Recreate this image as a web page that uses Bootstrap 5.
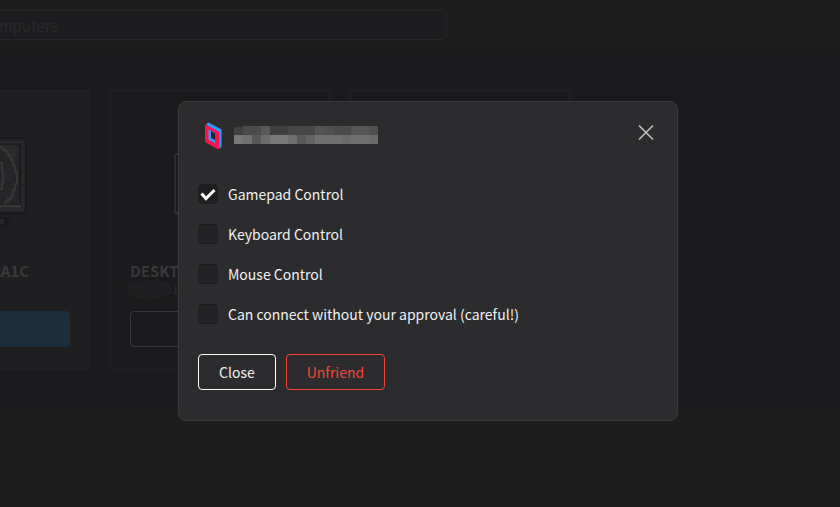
<!DOCTYPE html>
<html lang="en" data-bs-theme="dark">
<head>
<meta charset="utf-8">
<meta name="viewport" content="width=device-width, initial-scale=1">
<title>Friend permissions</title>
<link rel="stylesheet" href="https://cdn.jsdelivr.net/npm/bootstrap@5.3.0/dist/css/bootstrap.min.css">
<style>
  body { background: #1d1d1d; color: #f0f0f0; font-family: "Noto Sans CJK SC", "Noto Sans", sans-serif; font-size: 14px; line-height: 20px; min-height: 100vh; overflow: hidden; }
  .topbar { padding: 10px 0; margin-left: -40px; }
  .search-box { width: 487px; height: 30px; padding: 0 19px; font-size: 15px; background: #1d1d1f; border: 1px solid #262628; border-radius: 5px; }
  .search-box::placeholder { color: #29292b; opacity: 1; }
  .hosts { background: #1b1b1d; padding: 40px 0; }
  .host-list { gap: 20px; margin-left: -130px; }
  .host { flex: 0 0 220px; height: 280px; padding: 0 19px 22px; border: 1px solid #232325; }
  .host-own { background: #1f1f21; }
  .host-art { height: 170px; padding-top: 42px; }
  .host-name { font-size: 15px; line-height: 20px; font-weight: 700; color: #39393b; white-space: nowrap; }
  .host-own .host-name { padding-right: 41px; text-align: right; }
  .host-user { font-size: 12px; line-height: 16px; height: 30px; color: #2c2c2e; }
  .smudge { width: 46px; height: 18px; border-radius: 30% 30% 50% 50%; background: #1f1f21; margin-left: -4px; }
  .host-btn { height: 36px; border: 1px solid #38383a; border-radius: 4px; }
  .host-own .host-btn { background: #1c2d3b; border-color: #1c2d3b; }
  .overlay { padding: 15px 0 0 16px; }
  .panel { width: 500px; padding: 19px; background: #2c2c2e; border: 1px solid #39393b; border-radius: 8px; }
  .panel-head { height: 30px; margin-bottom: 33px; padding-left: 5px; gap: 10px; }
  .close-x { padding: 0; width: 24px; height: 24px; line-height: 0; border: 0; }
  .options { gap: 20px; margin-bottom: 30px; }
  .option { gap: 10px; min-height: 20px; margin: 0; padding: 0; }
  .option .form-check-input { float: none; margin: 0; width: 20px; height: 20px; background-color: #232325; border: 1px solid #1c1c1e; border-radius: 4px; }
  .option .form-check-input:checked { background-color: #1f1f21; background-size: 20px 20px; background-image: url("data:image/svg+xml,%3csvg xmlns='http://www.w3.org/2000/svg' viewBox='0 0 20 20'%3e%3cpath d='M3.5 9.5l4.5 5 8.5-8.5' fill='none' stroke='%23fff' stroke-width='3'/%3e%3c/svg%3e"); }
  .actions { gap: 10px; padding-bottom: 11px; }
  .act { height: 36px; padding: 0 20px; font-size: 14px; line-height: 34px; border-radius: 4px; }
  .act-close { color: #f0f0f0; border-color: #fff; }
  .act-unfriend { color: #f5443b; border-color: #f5443b; }
</style>
</head>
<body>
<header class="topbar"><input class="form-control search-box" type="search" placeholder="Computers" aria-label="Computers"></header>
<main class="hosts">
  <div class="host-list d-flex">
    <article class="host host-own">
      <div class="host-art d-flex justify-content-center">
        <svg width="102" height="100" viewBox="0 0 102 100" shape-rendering="crispEdges" aria-hidden="true">
          <path d="M6 4h90v2h2v74h-2v2H6v-2H4V6h2z" fill="#1a1a1c"/>
          <path d="M6 6h90v73H6z" fill="#222325"/>
          <path d="M6 8h89v2H6z" fill="#2a2b2e"/>
          <path d="M93 9h2v69h-2z" fill="#27282a"/>
          <path d="M9 11h83v64H9z" fill="#1d1d20"/>
          <path d="M12 12h78v59H12z" fill="#242528"/>
          <path d="M72 12h18v8l-9 8z" fill="#292a2b"/>
          <path d="M9 72h83v2H9z" fill="#383838"/>
          <path d="M9 74h83v4H9z" fill="#292b2e"/>
          <path d="M71 14h2v2h2v2h3v3h2v2h2v4h2v6h2v6h2v12h-2v6h-2v6h-2v3h-3v2h-2v2h-2" fill="none" stroke="#353532" stroke-width="2"/>
          <path d="M71 30h2v8h1v12h-1v6h-2" fill="none" stroke="#353532" stroke-width="2"/>
          <path d="M22 84h57v3h2v6h-3v2H22z" fill="#1a1a1c"/>
          <path d="M24 86h51v5H24z" fill="#262729"/>
        </svg>
      </div>
      <h2 class="host-name mb-0">AA1C</h2>
      <div class="host-user"></div>
      <button class="btn w-100 host-btn" type="button" aria-label="Connect"></button>
    </article>
    <article class="host">
      <div class="host-art d-flex justify-content-center">
        <svg width="102" height="100" viewBox="0 0 102 100" shape-rendering="crispEdges" aria-hidden="true">
          <path d="M3 19h96v65H3z" fill="#171719"/>
          <path d="M5 20h92v62H5z" fill="#2b2c2e"/>
          <path d="M7 22h88v56H7z" fill="#19191b"/>
        </svg>
      </div>
      <h2 class="host-name mb-0">DESKTOP</h2>
      <div class="host-user d-flex"><span class="smudge"></span>10</div>
      <button class="btn w-100 host-btn" type="button" aria-label="Connect"></button>
    </article>
    <article class="host"></article>
  </div>
</main>
<div class="overlay position-fixed top-0 start-0 w-100 h-100 d-flex align-items-center justify-content-center">
  <section class="panel" role="dialog" aria-label="Friend permissions">
    <div class="panel-head d-flex align-items-center">
      <svg width="21" height="30" viewBox="0 0 21 30" aria-hidden="true">
        <path d="M3.500 2.500L5.500 1.500 18.500 8.500V26L16 27.500z" fill="#2f9dfa"/>
        <path d="M2 3L15.500 10.500Q16.500 11 16.500 12V28L14.500 28 3 21.500Q2 21 2 20z" fill="#ff1050"/>
        <path d="M5.500 8.500L12 12V22L5.500 18.500z" fill="#2f9dfa"/>
        <path d="M8 10L12 12.500V19L8 17z" fill="#242028"/>
      </svg>
      <svg width="144" height="20" viewBox="0 0 144 20" shape-rendering="crispEdges" role="img" aria-label="Hidden name">
        <g fill="#4b4b4c"><path d="M9 0h18v9H9zM99 0h18v9H99z"/></g>
        <path d="M0 1h9v8H0zM36 0h18v9H36z" fill="#3f3f40"/>
        <path d="M27 0h9v9h-9z" fill="#59595a"/>
        <path d="M54 0h27v9H54z" fill="#474748"/>
        <path d="M81 0h9v9h-9zM117 0h18v9h-18z" fill="#555556"/>
        <path d="M90 0h9v9h-9zM135 0h9v9h-9z" fill="#505051"/>
        <path d="M0 9h9v9H0zM36 9h18v9H36z" fill="#787879"/>
        <path d="M9 9h9v9H9zM54 9h9v9h-9zM81 9h27v9H81zM117 9h18v9h-18z" fill="#707071"/>
        <path d="M18 9h9v9h-9zM63 9h9v9h-9z" fill="#585859"/>
        <path d="M72 9h9v9h-9z" fill="#646465"/>
        <path d="M27 9h9v9h-9zM108 9h9v9h-9zM135 9h9v9h-9z" fill="#6b6b6c"/>
      </svg>
      <button class="btn close-x ms-auto align-self-start" type="button" aria-label="Dismiss">
        <svg width="24" height="24" viewBox="0 0 24 24" aria-hidden="true"><path d="M5 4.500l14 14M19 4.500l-14 14" fill="none" stroke="#bdbdbe" stroke-width="1.700"/></svg>
      </button>
    </div>
    <div class="options d-flex flex-column">
      <div class="form-check option d-flex align-items-center"><input class="form-check-input" type="checkbox" id="gamepad" checked><label for="gamepad">Gamepad Control</label></div>
      <div class="form-check option d-flex align-items-center"><input class="form-check-input" type="checkbox" id="keyboard"><label for="keyboard">Keyboard Control</label></div>
      <div class="form-check option d-flex align-items-center"><input class="form-check-input" type="checkbox" id="mouse"><label for="mouse">Mouse Control</label></div>
      <div class="form-check option d-flex align-items-center"><input class="form-check-input" type="checkbox" id="approval"><label for="approval">Can connect without your approval (careful!)</label></div>
    </div>
    <div class="actions d-flex"><button class="btn act act-close" type="button">Close</button><button class="btn act act-unfriend" type="button">Unfriend</button></div>
  </section>
</div>
<script src="https://cdn.jsdelivr.net/npm/bootstrap@5.3.0/dist/js/bootstrap.bundle.min.js"></script>
</body>
</html>
